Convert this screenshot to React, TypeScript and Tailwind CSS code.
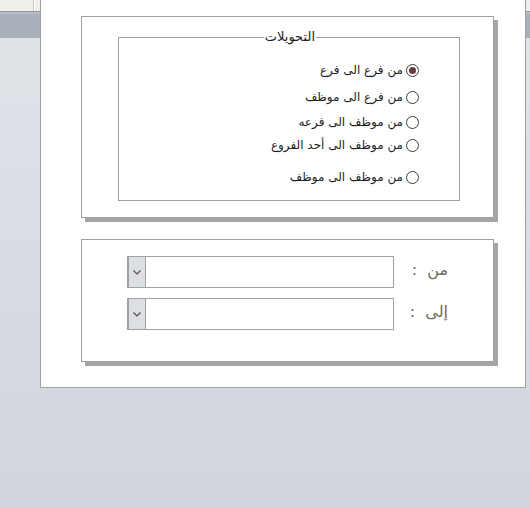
import React from 'react';

const options = [
  { label: 'من فرع الى فرع', checked: true, mt: 'mt-[22px]' },
  { label: 'من فرع الى موظف', checked: false, mt: 'mt-[7px]' },
  { label: 'من موظف الى فرعه', checked: false, mt: 'mt-[5px]' },
  { label: 'من موظف الى أحد الفروع', checked: false, mt: 'mt-[3px]' },
  { label: 'من موظف الى موظف', checked: false, mt: 'mt-[12px]' },
];

const Radio: React.FC<{ checked: boolean }> = ({ checked }) => (
  <span className="flex h-[13px] w-[13px] shrink-0 items-center justify-center rounded-full border border-[#3c3c3c] bg-white">
    {checked && <span className="h-[7px] w-[7px] rounded-full bg-[#6b3a3e]" />}
  </span>
);

const ComboBox: React.FC = () => (
  <div className="flex h-[32px] w-[267px] border border-[#a0a0a0] bg-white">
    <div className="flex w-[18px] items-center justify-center border-l border-r border-[#a0a0a0] bg-[#dcdfe4]">
      <svg width="8" height="5" viewBox="0 0 8 5" fill="none">
        <path d="M0.5 0.5 L4 4 L7.5 0.5" stroke="#5a4448" strokeWidth="1.1" />
      </svg>
    </div>
  </div>
);

const Strip: React.FC<{ line?: boolean }> = ({ line }) => (
  <div className="flex flex-col">
    <div className="flex h-[11px] bg-[#f0f0ea]">
      {line && (
        <>
          <div className="w-[33px]" />
          <div className="w-px bg-[#c4c4c4]" />
          <div className="w-px bg-white" />
        </>
      )}
    </div>
    <div className="h-px bg-[#8f99a5]" />
    <div className="h-[2px] bg-[#b7bdc6]" />
    <div className="h-[24px] bg-[#a9b0ba]" />
  </div>
);

export default function App() {
  return (
    <div
      className="flex h-[507px] w-[530px] overflow-hidden bg-gradient-to-b from-[#e1e5ea] to-[#d1d5dc]"
      style={{ fontFamily: '"DejaVu Sans", sans-serif' }}
    >
      <div className="w-[40px] shrink-0">
        <Strip line />
      </div>

      <div className="flex h-[388px] w-[486px] shrink-0 flex-col border-x border-b border-[#a0a0a0] bg-white">
        {/* transfers group */}
        <div className="ml-[40px] mt-[16px] h-[202px] w-[413px] border border-[#a0a0a0] bg-white shadow-[4px_4px_0_#a6a6a6]">
          <div
            dir="rtl"
            className="relative ml-[36px] mt-[20px] flex h-[164px] w-[342px] flex-col border border-[#a0a0a0] pr-[40px]"
          >
            <span className="absolute -top-[10px] right-[143px] bg-white px-px text-[13px] leading-[18px] text-[#1e1e1e]">
              التحويلات
            </span>
            {options.map((o) => (
              <label key={o.label} className={`flex h-[20px] items-center gap-[3px] ${o.mt}`}>
                <Radio checked={o.checked} />
                <span className="text-[12px] leading-[20px] text-[#1e1e1e]">{o.label}</span>
              </label>
            ))}
          </div>
        </div>

        {/* from / to */}
        <div className="ml-[40px] mt-[21px] flex h-[123px] w-[413px] flex-col gap-[10px] border border-[#a0a0a0] bg-white pl-[45px] pt-[16px] shadow-[4px_4px_0_#a6a6a6]">
          <div className="flex items-center">
            <ComboBox />
            <div dir="rtl" className="mb-[4px] ml-[18px] w-[36px] whitespace-pre text-right text-[16px] leading-[20px] text-[#6f6a62]">
              من  :
            </div>
          </div>
          <div className="flex items-center">
            <ComboBox />
            <div dir="rtl" className="mb-[4px] ml-[18px] w-[36px] whitespace-pre text-right text-[16px] leading-[20px] text-[#6f6a62]">
              إلى  :
            </div>
          </div>
        </div>
      </div>

      <div className="w-[4px] shrink-0">
        <Strip />
      </div>
    </div>
  );
}
